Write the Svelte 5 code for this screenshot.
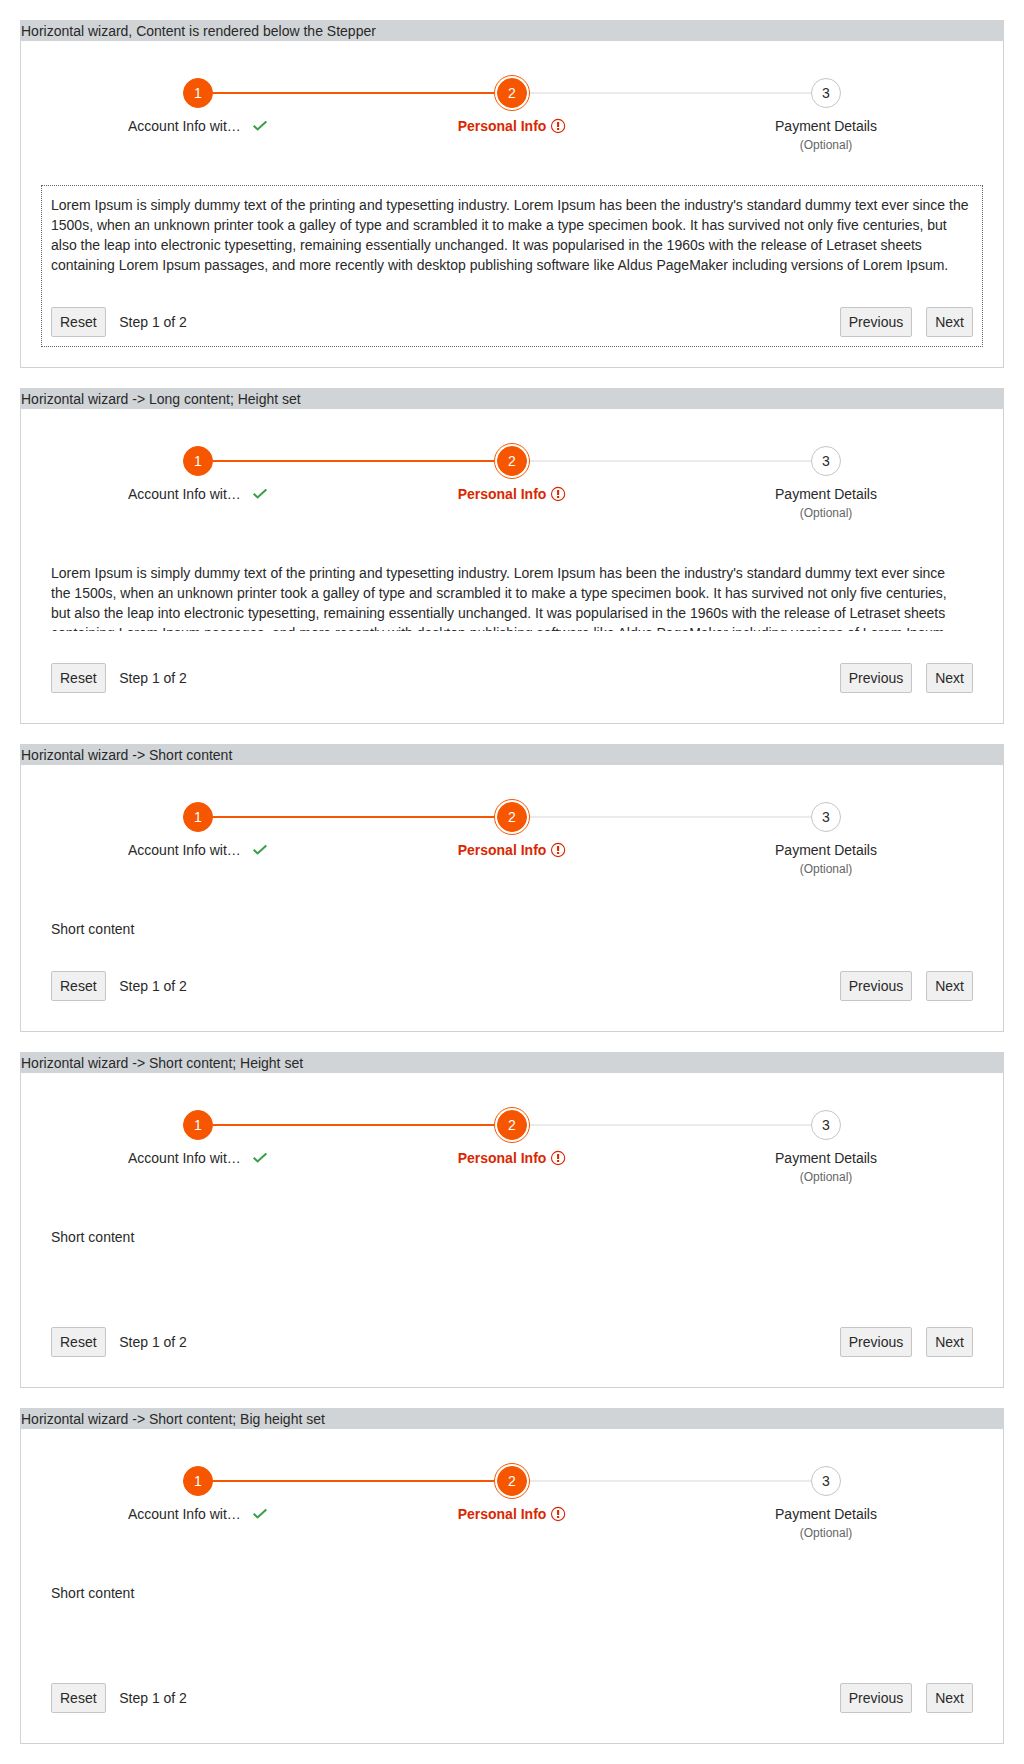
<script>
  const lorem =
    "Lorem Ipsum is simply dummy text of the printing and typesetting industry. Lorem Ipsum has been the industry's standard dummy text ever since the 1500s, when an unknown printer took a galley of type and scrambled it to make a type specimen book. It has survived not only five centuries, but also the leap into electronic typesetting, remaining essentially unchanged. It was popularised in the 1960s with the release of Letraset sheets containing Lorem Ipsum passages, and more recently with desktop publishing software like Aldus PageMaker including versions of Lorem Ipsum.";

  const wizards = [
    { title: 'Horizontal wizard, Content is rendered below the Stepper', text: lorem, focused: true },
    { title: 'Horizontal wizard -> Long content; Height set', text: lorem, fixed: true, scroll: true },
    { title: 'Horizontal wizard -> Short content', text: 'Short content' },
    { title: 'Horizontal wizard -> Short content; Height set', text: 'Short content', fixed: true },
    { title: 'Horizontal wizard -> Short content; Big height set', text: 'Short content', fixed: true }
  ];
</script>

<main>
  {#each wizards as wizard}
    <section>
      <h2>{wizard.title}</h2>
      <div class="wizard">
        <ol class="stepper">
          <li class="done">
            <div class="track"><i class="line none"></i><span class="circle">1</span><i class="line"></i></div>
            <div class="label">
              <span class="name">Account Info wit…</span>
              <svg class="ok" viewBox="0 0 16 16"><path d="M1.7 7.8 5.6 11.4 14.3 3.4" /></svg>
            </div>
          </li>
          <li class="current">
            <div class="track"><i class="line"></i><span class="ring"><span class="circle">2</span></span><i class="line next"></i></div>
            <div class="label error">
              <span>Personal Info</span>
              <svg viewBox="0 0 16 16">
                <circle cx="8.1" cy="8" r="6.6" />
                <path d="M8.1 4V9M8.1 10V12" />
              </svg>
            </div>
          </li>
          <li>
            <div class="track"><i class="line next"></i><span class="circle">3</span><i class="line none"></i></div>
            <div class="label"><span>Payment Details</span></div>
            <div class="optional">(Optional)</div>
          </li>
        </ol>
        <div class="step" class:focused={wizard.focused}>
          <div class="content" class:fixed={wizard.fixed} class:scroll={wizard.scroll}>{wizard.text}</div>
          <div class="buttons">
            <button>Reset</button>
            <span class="count">Step 1 of 2</span>
            <button>Previous</button>
            <button>Next</button>
          </div>
        </div>
      </div>
    </section>
  {/each}
</main>

<style>
  :global(body) {
    background: #fff;
  }
  main {
    display: flex;
    flex-direction: column;
    gap: 20px;
    padding: 20px;
    font: 14px/20px 'Liberation Sans', Arial, sans-serif;
    color: #292929;
  }
  section {
    border: 1px solid #d0d4d7;
    border-right-color: #d0d0d0;
    border-bottom-color: #d0d0d0;
  }
  h2 {
    margin: 0 -1px 0 0;
    font: inherit;
    background: #d0d4d7;
  }
  .wizard {
    padding: 20px;
  }
  .stepper {
    display: flex;
    height: 124px;
    margin: 0;
    padding: 0;
    list-style: none;
  }
  li {
    flex: 1;
    display: flex;
    flex-direction: column;
    align-items: center;
    padding-top: 14px;
  }
  .track {
    display: flex;
    align-items: center;
    align-self: stretch;
    height: 36px;
  }
  .line {
    flex: 1;
    height: 2px;
    background: #f65600;
  }
  .line.next {
    background: #ebebeb;
  }
  .line.none {
    background: none;
  }
  .circle {
    box-sizing: border-box;
    width: 30px;
    height: 30px;
    border: 1px solid #c5c5c5;
    border-radius: 50%;
    line-height: 28px;
    text-align: center;
  }
  .done .circle,
  .current .circle {
    background: #f65600;
    border-color: #f65600;
    color: #fff;
  }
  .ring {
    display: flex;
    padding: 2px;
    border: 1px solid #f65600;
    border-radius: 50%;
  }
  .label {
    display: flex;
    align-items: center;
    gap: 4px;
    height: 20px;
    margin-top: 5px;
  }
  .name {
    width: 120px;
  }
  .error {
    color: #d92800;
    font-weight: bold;
  }
  svg {
    width: 16px;
    height: 16px;
    fill: none;
    stroke: #d92800;
  }
  svg circle {
    stroke-width: 1.1;
  }
  svg path {
    stroke-width: 2.1;
  }
  .ok {
    stroke: #37a046;
  }
  .optional {
    font-size: 12px;
    line-height: 18px;
    color: #666;
  }
  .step {
    padding: 10px;
  }
  .focused {
    outline: 1px dotted #666;
    outline-offset: -1px;
  }
  .fixed {
    height: 68px;
    overflow: hidden;
  }
  .scroll {
    padding-right: 15px;
  }
  .buttons {
    display: flex;
    align-items: center;
    margin-top: 32px;
    gap: 14px;
  }
  .count {
    margin: 0 auto 0 -0.4px;
  }
  button {
    height: 30px;
    padding: 0 8px;
    border: 1px solid #c5c5c5;
    border-radius: 2px;
    background: #f0f0f0;
    font: inherit;
    color: inherit;
  }
</style>
